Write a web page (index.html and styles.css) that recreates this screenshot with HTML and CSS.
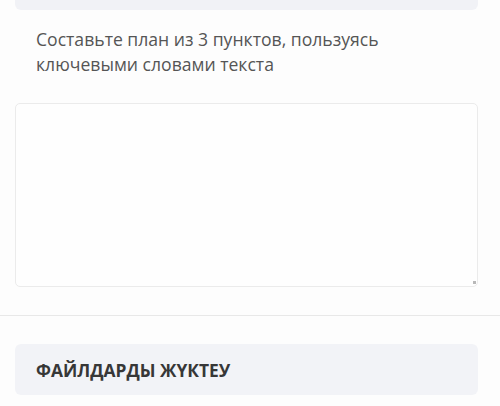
FILE: index.html
```html
<!DOCTYPE html>
<html lang="ru">
<head>
<meta charset="utf-8">
<link rel="stylesheet" href="styles.css">
</head>
<body>
<div class="page">
  <div class="top-box"></div>
  <p class="question">Составьте план из 3 пунктов, пользуясь ключевыми словами текста</p>
  <div class="answer-wrap">
    <textarea class="answer"></textarea>
    <span class="grip"></span>
  </div>
  <div class="divider"></div>
  <div class="upload">ФАЙЛДАРДЫ ЖҮКТЕУ</div>
</div>
</body>
</html>
```

FILE: styles.css
```css
html, body {
  margin: 0;
  padding: 0;
  background: #fdfdfd;
}
.page {
  width: 500px;
  height: 406px;
  overflow: hidden;
  display: flex;
  flex-direction: column;
  font-family: "Open Sans", "Noto Sans", sans-serif;
}
.top-box {
  margin: -20px 22px 0 15px;
  height: 30px;
  background: #f1f2f6;
  border-radius: 6px;
  flex: none;
}
.question {
  margin: 17px 60px 0 36px;
  font-size: 17.6px;
  line-height: 25px;
  color: #555;
}
.answer-wrap {
  position: relative;
  margin: 26px 22px 0 15px;
  height: 184px;
  flex: none;
}
.answer {
  display: block;
  width: 100%;
  height: 100%;
  box-sizing: border-box;
  border: 1px solid #ebebeb;
  border-radius: 5px;
  background: #fefefe;
  resize: none;
  margin: 0;
}
.grip {
  position: absolute;
  right: 2px;
  bottom: 3px;
  width: 3px;
  height: 3px;
  background: #b8b8b8;
}
.divider {
  margin-top: 28px;
  height: 1px;
  background: #e8e8e8;
  flex: none;
}
.upload {
  margin: 28px 22px 0 15px;
  height: 51px;
  box-sizing: border-box;
  background: #f2f3f7;
  border-radius: 6px;
  padding-left: 21px;
  display: flex;
  align-items: center;
  font-weight: 700;
  font-size: 17.4px;
  color: #373737;
  flex: none;
}
```
